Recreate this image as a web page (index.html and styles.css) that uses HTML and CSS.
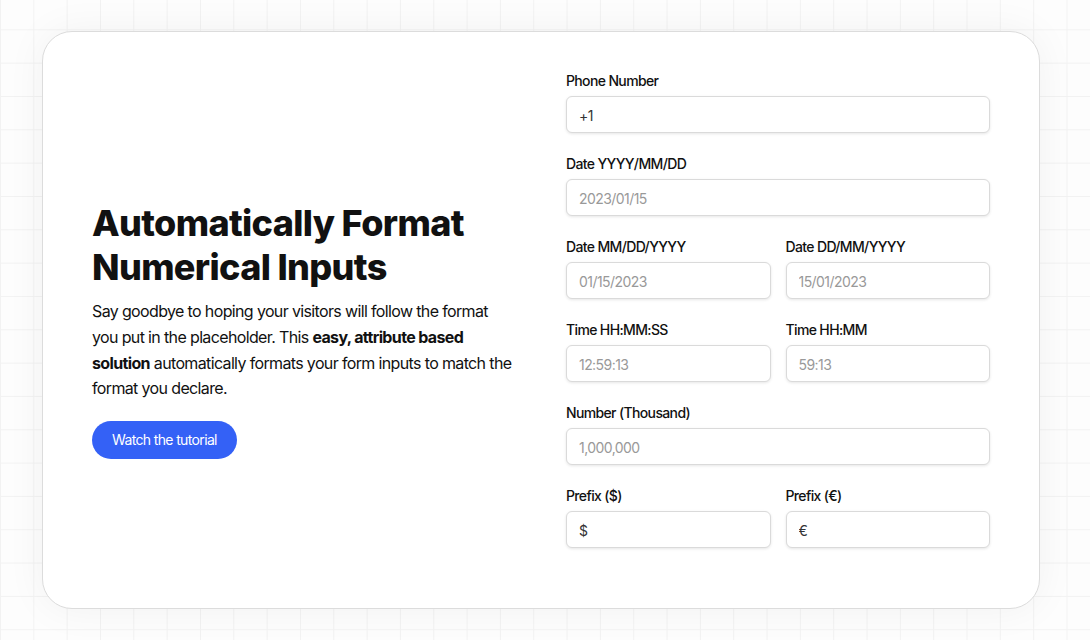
FILE: index.html
```html
<!DOCTYPE html>
<html lang="en">
<head>
  <meta charset="UTF-8" />
  <meta name="viewport" content="width=device-width, initial-scale=1.0"/>
  <title>Automatically Format Numerical Inputs</title>
  <link rel="stylesheet" href="styles.css">
</head>
<body>
  <div class="page">
    <div class="card">
      <div class="intro">
        <h1>Automatically Format Numerical Inputs</h1>
        <p>Say goodbye to hoping your visitors will follow the format you put in the placeholder. This <strong>easy, attribute based solution</strong> automatically formats your form inputs to match the format you declare.</p>
        <a class="btn" href="#">Watch the tutorial</a>
      </div>

      <form class="form">
        <div class="field">
          <label for="phone">Phone Number</label>
          <input type="text" id="phone" value="+1"/>
        </div>
        <div class="field">
          <label for="date1">Date YYYY/MM/DD</label>
          <input type="text" id="date1" placeholder="2023/01/15"/>
        </div>
        <div class="row">
          <div class="field">
            <label for="date2">Date MM/DD/YYYY</label>
            <input type="text" id="date2" placeholder="01/15/2023"/>
          </div>
          <div class="field">
            <label for="date3">Date DD/MM/YYYY</label>
            <input type="text" id="date3" placeholder="15/01/2023"/>
          </div>
        </div>
        <div class="row">
          <div class="field">
            <label for="time1">Time HH:MM:SS</label>
            <input type="text" id="time1" placeholder="12:59:13"/>
          </div>
          <div class="field">
            <label for="time2">Time HH:MM</label>
            <input type="text" id="time2" placeholder="59:13"/>
          </div>
        </div>
        <div class="field">
          <label for="thousand">Number (Thousand)</label>
          <input type="text" id="thousand" placeholder="1,000,000"/>
        </div>
        <div class="row">
          <div class="field">
            <label for="usd">Prefix ($)</label>
            <input type="text" id="usd" value="$"/>
          </div>
          <div class="field">
            <label for="eur">Prefix (€)</label>
            <input type="text" id="eur" value="€"/>
          </div>
        </div>
      </form>
    </div>
  </div>
</body>
</html>
```

FILE: styles.css
```css
* {
  box-sizing: border-box;
}
body {
  margin: 0;
  font-family: Inter, "Noto Sans", sans-serif;
  color: #111;
  letter-spacing: -0.04em;
  background-color: #fdfdfd;
  background-image:
    linear-gradient(to right, #f2f2f2 1px, transparent 1px),
    linear-gradient(to bottom, #f2f2f2 1px, transparent 1px);
  background-size: 33.333px 33.333px;
  background-position: 0 -4px;
}
.page {
  height: 640px;
  padding: 31px 50px 31px 42px;
}
.card {
  height: 100%;
  background: #fff;
  border: 1px solid #dcdcdc;
  border-radius: 30px;
  box-shadow: 0 0 40px rgba(0,0,0,0.05);
  padding: 39px 49px;
  display: grid;
  grid-template-columns: 1fr 1fr;
  column-gap: 50px;
  align-items: center;
}
.intro {
  padding-top: 20px;
}
.intro h1 {
  font-size: 36px;
  line-height: 44px;
  font-weight: 800;
  letter-spacing: -0.018em;
  margin: 0 0 10px;
}
.intro p {
  font-size: 16px;
  line-height: 25.6px;
  margin: 0 0 19px;
}
.intro strong {
  font-weight: 700;
}
.btn {
  display: inline-block;
  background: #3461f6;
  color: #fff;
  text-decoration: none;
  font-size: 14px;
  line-height: 38px;
  height: 38px;
  padding: 0 20px;
  border-radius: 19px;
}
.form {
  display: flex;
  flex-direction: column;
}
.row {
  display: grid;
  grid-template-columns: 1fr 1fr;
  column-gap: 15px;
}
.field {
  display: flex;
  flex-direction: column;
  margin-bottom: 21px;
}
label {
  font-size: 14px;
  line-height: 20px;
  font-weight: 500;
  margin-bottom: 5px;
}
input {
  height: 37px;
  width: 100%;
  font-family: inherit;
  font-size: 14px;
  letter-spacing: -0.04em;
  color: #333;
  padding: 2px 12px 0;
  border: 1px solid #dadada;
  border-radius: 6px;
  box-shadow: 0 1px 3px rgba(0,0,0,0.1);
  outline: none;
}
input::placeholder {
  color: #999;
}
```
